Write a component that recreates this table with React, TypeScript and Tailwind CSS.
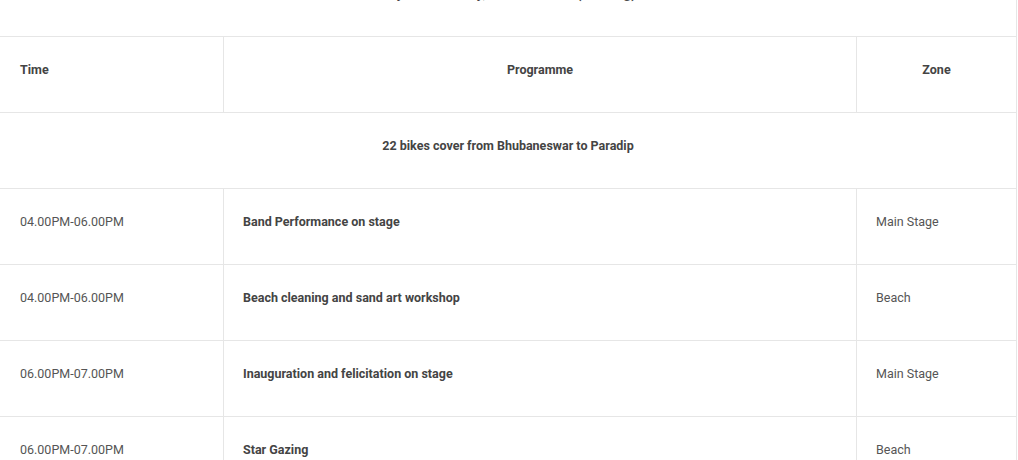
import React from "react";

const rows = [
  { time: "04.00PM-06.00PM", prog: "Band Performance on stage", zone: "Main Stage" },
  { time: "04.00PM-06.00PM", prog: "Beach cleaning and sand art workshop", zone: "Beach" },
  { time: "06.00PM-07.00PM", prog: "Inauguration and felicitation on stage", zone: "Main Stage" },
  { time: "06.00PM-07.00PM", prog: "Star Gazing", zone: "Beach" },
];

export default function App() {
  return (
    <div
      className="w-[1018px] h-[460px] overflow-hidden bg-white text-[12.5px]"
      style={{ fontFamily: "Roboto, 'Liberation Sans', sans-serif" }}
    >
      <div className="w-[1017px] border-r border-[#e6e6e6]">
        <div className="h-[37px] border-b border-[#e6e6e6] overflow-hidden flex justify-center">
          <div className="mt-[-17px] text-[14px] font-bold text-[#444]">
            Day 1 - Saturday, 22 December (Evening)
          </div>
        </div>
        <div className="grid grid-cols-[224px_633px_1fr] h-[76px] border-b border-[#e6e6e6] font-bold text-[#444]">
          <div className="pl-5 pt-[24px] border-r border-[#e6e6e6]">Time</div>
          <div className="text-center pt-[24px] border-r border-[#e6e6e6]">Programme</div>
          <div className="text-center pt-[24px]">Zone</div>
        </div>
        <div className="h-[76px] border-b border-[#e6e6e6] text-center font-bold text-[#444] pt-[24px]">
          22 bikes cover from Bhubaneswar to Paradip
        </div>
        {rows.map((r, i) => (
          <div
            key={i}
            className="grid grid-cols-[224px_633px_1fr] h-[76px] border-b border-[#e6e6e6]"
          >
            <div className="pl-5 pt-[24px] border-r border-[#e6e6e6] text-[#555]">{r.time}</div>
            <div className="pl-[19px] pt-[24px] border-r border-[#e6e6e6] font-bold text-[#444]">{r.prog}</div>
            <div className="pl-[19px] pt-[24px] text-[#555]">{r.zone}</div>
          </div>
        ))}
      </div>
    </div>
  );
}
